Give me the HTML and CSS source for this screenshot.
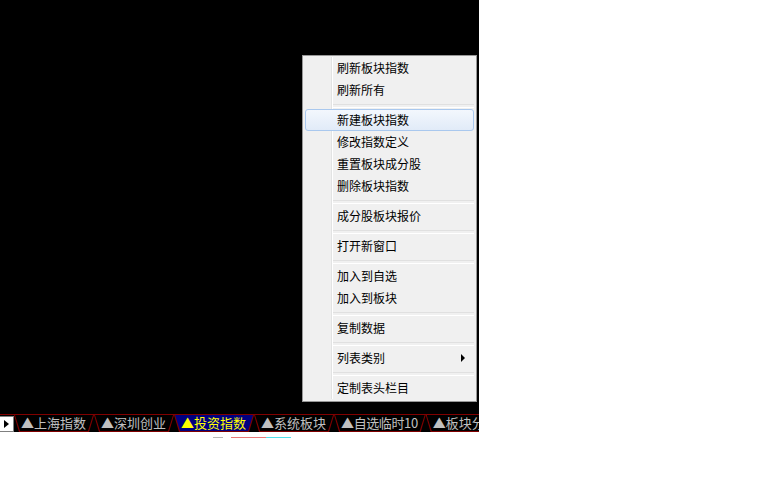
FILE: index.html
```html
<!DOCTYPE html>
<html lang="zh-CN">
<head>
  <meta charset="UTF-8">
  <title>板块指数</title>
  <link rel="stylesheet" href="styles.css">
</head>
<body>
  <div class="screen">
    <div class="canvas">
      <div class="menu">
        <div class="item">刷新板块指数</div>
        <div class="item">刷新所有</div>
        <div class="sep"></div>
        <div class="item active">新建板块指数</div>
        <div class="item">修改指数定义</div>
        <div class="item">重置板块成分股</div>
        <div class="item">删除板块指数</div>
        <div class="sep"></div>
        <div class="item">成分股板块报价</div>
        <div class="sep"></div>
        <div class="item">打开新窗口</div>
        <div class="sep"></div>
        <div class="item">加入到自选</div>
        <div class="item">加入到板块</div>
        <div class="sep"></div>
        <div class="item">复制数据</div>
        <div class="sep"></div>
        <div class="item sub">列表类别</div>
        <div class="sep"></div>
        <div class="item">定制表头栏目</div>
      </div>
    </div>
    <div class="tabbar">
      <div class="scroll-btn"><span class="arrow"></span></div>
      <div class="tab"><span>▲上海指数</span></div>
      <div class="tab"><span>▲深圳创业</span></div>
      <div class="tab current"><span>▲投资指数</span></div>
      <div class="tab"><span>▲系统板块</span></div>
      <div class="tab"><span class="num">▲自选临时10</span></div>
      <div class="tab"><span>▲板块分</span></div>
    </div>
  </div>
  <div class="residue">
    <span class="mark grey"></span>
    <span class="mark pink"></span>
    <span class="mark cyan"></span>
  </div>
</body>
</html>
```

FILE: styles.css
```css
*{
  margin: 0;
  padding: 0;
  box-sizing: border-box;
}
body {
  background: #fff;
  font-family: "Noto Sans CJK SC", "Noto Sans", sans-serif;
}

.screen {
  width: 479px;
  background: #000;
}

.canvas {
  position: relative;
  height: 414px;
}

/* context menu */
.menu {
  position: absolute;
  left: 302px;
  top: 55px;
  width: 175px;
  padding: 1px 2px 2px 2px;
  background: #f0f0f0;
  border: 1px solid #979797;
  font-size: 12px;
  color: #000;
}
.menu::before {
  content: "";
  position: absolute;
  left: 28px;
  top: 1px;
  bottom: 2px;
  width: 1px;
  background: #e2e3e3;
  border-right: 1px solid #fff;
  box-sizing: content-box;
}
.item {
  position: relative;
  height: 22px;
  line-height: 20px;
  padding-left: 31px;
  border: 1px solid transparent;
  border-radius: 3px;
}
.item.active {
  background: linear-gradient(#f3f7fd, #e1ebf8);
  border-color: #a9c8ee;
}
.item.sub::after {
  content: "";
  position: absolute;
  right: 8px;
  top: 6px;
  border-left: 4px solid #000;
  border-top: 4px solid transparent;
  border-bottom: 4px solid transparent;
}
.sep {
  position: relative;
  height: 8px;
}
.sep::after {
  content: "";
  position: absolute;
  left: 28px;
  right: 0;
  top: 3px;
  height: 2px;
  border-top: 1px solid #e0e0e0;
  border-bottom: 1px solid #fff;
}

/* sheet tabs */
.tabbar {
  display: flex;
  height: 18px;
  border-top: 1px solid #800000;
  overflow: hidden;
  white-space: nowrap;
}
.scroll-btn {
  flex: none;
  width: 14px;
  height: 16px;
  margin-top: 1px;
  background: #fff;
  border: 1px solid #808080;
  border-left: none;
  display: flex;
  align-items: center;
  justify-content: center;
}
.arrow {
  border-left: 5px solid #000;
  border-top: 4px solid transparent;
  border-bottom: 4px solid transparent;
}
.tab {
  flex: none;
  height: 17px;
  padding: 0 1px 1px 1px;
  background: #800000;
  clip-path: polygon(0 0, 100% 0, calc(100% - 5px) 100%, 5px 100%);
}
.tab span {
  display: block;
  height: 16px;
  line-height: 16px;
  padding: 0 7px 0 6px;
  background: #000;
  color: #c0c0c0;
  font-size: 13px;
  clip-path: polygon(0 0, 100% 0, calc(100% - 5px) 100%, 5px 100%);
}
.tab span.num {
  letter-spacing: -0.4px;
}
.tab.current span {
  background: #000080;
  color: #ffff00;
}

/* stray pixels under the window */
.residue {
  display: flex;
  padding-top: 5px;
  height: 8px;
}
.mark {
  height: 1px;
}
.mark.grey {
  width: 10px;
  margin-left: 213px;
  background: #b8b8b8;
}
.mark.pink {
  width: 35px;
  margin-left: 8px;
  background: #e87878;
}
.mark.cyan {
  width: 25px;
  background: #50e0ea;
}
```
